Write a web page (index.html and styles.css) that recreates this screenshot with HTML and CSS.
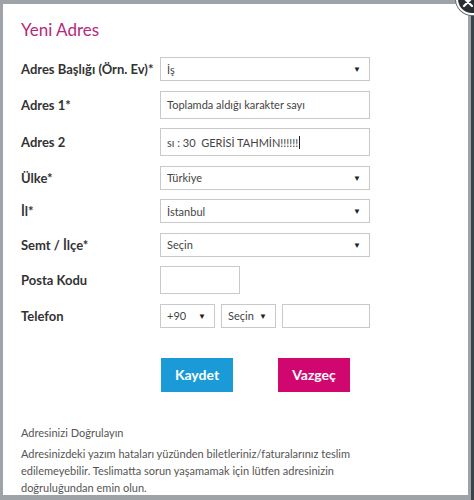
FILE: index.html
```html
<!DOCTYPE html>
<html lang="tr">
<head>
    <meta charset="UTF-8">
    <meta name="viewport" content="width=device-width, initial-scale=1.0">
    <title>Yeni Adres</title>
    <link rel="stylesheet" href="styles.css">
</head>
<body>
    <div class="modal">
        <h1>Yeni Adres</h1>

        <div class="form">
            <!-- Adres başlığı -->
            <label>Adres Başlığı (Örn. Ev)*</label>
            <div class="select wide"><span>İş</span><i>▼</i></div>

            <label>Adres 1*</label>
            <div class="field wide">Toplamda aldığı karakter sayı</div>

            <label>Adres 2</label>
            <div class="field wide">sı : 30&nbsp; GERİSİ TAHMİN!!!!!!<b class="caret"></b></div>

            <label>Ülke*</label>
            <div class="select wide"><span>Türkiye</span><i>▼</i></div>

            <label>İl*</label>
            <div class="select wide"><span>İstanbul</span><i>▼</i></div>

            <label>Semt / İlçe*</label>
            <div class="select wide"><span>Seçin</span><i>▼</i></div>

            <label>Posta Kodu</label>
            <div class="field short"></div>

            <label>Telefon</label>
            <div class="phone">
                <div class="select tiny"><span>+90</span><i>▼</i></div>
                <div class="select tiny"><span>Seçin</span><i>▼</i></div>
                <div class="field num"></div>
            </div>
        </div>

        <!-- Butonlar -->
        <div class="buttons">
            <button class="save">Kaydet</button>
            <button class="cancel">Vazgeç</button>
        </div>

        <div class="note">
            <p class="note-title">Adresinizi Doğrulayın</p>
            <p>Adresinizdeki yazım hataları yüzünden biletleriniz/faturalarınız teslim edilemeyebilir. Teslimatta sorun yaşamamak için lütfen adresinizin doğruluğundan emin olun.</p>
        </div>
    </div>

    <div class="close">
        <svg width="12" height="12" viewBox="0 0 12 12"><path d="M2 2 L10 10 M10 2 L2 10" stroke="#fff" stroke-width="2.2" stroke-linecap="round"/></svg>
    </div>
</body>
</html>
```

FILE: styles.css
```css
html, body {
    height: 500px;
    overflow: hidden;
}
body {
    margin: 0;
    background: #9ea3a8;
    box-shadow: inset -3px 0 0 #3c4248;
    font-family: Lato, "Open Sans", sans-serif;
    color: #333;
    position: relative;
}
.modal {
    margin: 4px 6px 0 3px;
    height: 491px;
    background: #fff;
    padding: 15px 18px 0 18px;
    box-sizing: border-box;
}
h1 {
    margin: 0;
    font-size: 17px;
    font-weight: 400;
    line-height: 22px;
    color: #b5297c;
}
.form {
    margin-top: 16px;
    display: grid;
    grid-template-columns: 139px auto;
    row-gap: 9.5px;
    align-items: center;
}
label {
    font-weight: 700;
    font-size: 13px;
    color: #333;
}
.select, .field {
    border: 1px solid #c9c9c9;
    box-sizing: border-box;
    font-size: 11px;
    color: #444;
    display: flex;
    align-items: center;
    padding: 0 6px;
}
.select {
    height: 24px;
    justify-content: space-between;
}
.select i {
    font-style: normal;
    font-size: 8px;
    color: #222;
    margin-right: 2px;
}
.field {
    height: 28px;
}
.wide {
    width: 210px;
}
.short {
    width: 80px;
}
.caret {
    display: inline-block;
    width: 1px;
    height: 13px;
    background: #222;
    margin-left: 1px;
}
.phone {
    display: flex;
    gap: 6px;
}
.tiny {
    width: 55px;
}
.num {
    width: 88px;
    height: 24px;
}
.buttons {
    margin: 30px 0 0 140px;
    display: flex;
    gap: 45px;
}
button {
    width: 72px;
    height: 34px;
    border: none;
    color: white;
    font-family: Lato, sans-serif;
    font-weight: 700;
    font-size: 14px;
    padding: 0;
}
.save {
    background-color: #1a9bd7;
}
.cancel {
    background-color: #d0076f;
}
.note {
    margin-top: 32px;
    width: 345px;
    font-size: 11px;
    color: #555;
    line-height: 17px;
}
.note p {
    margin: 0;
}
.note-title {
    margin-bottom: 4px !important;
}
.close {
    position: absolute;
    top: -17px;
    right: -14px;
    width: 32px;
    height: 32px;
    border-radius: 50%;
    background: #2a2e33;
    border: 2px solid #fff;
    box-shadow: 0 0 0 1px #6b7177;
    display: flex;
    align-items: flex-end;
    justify-content: flex-start;
    padding: 0 0 5px 4px;
    box-sizing: border-box;
}
```
